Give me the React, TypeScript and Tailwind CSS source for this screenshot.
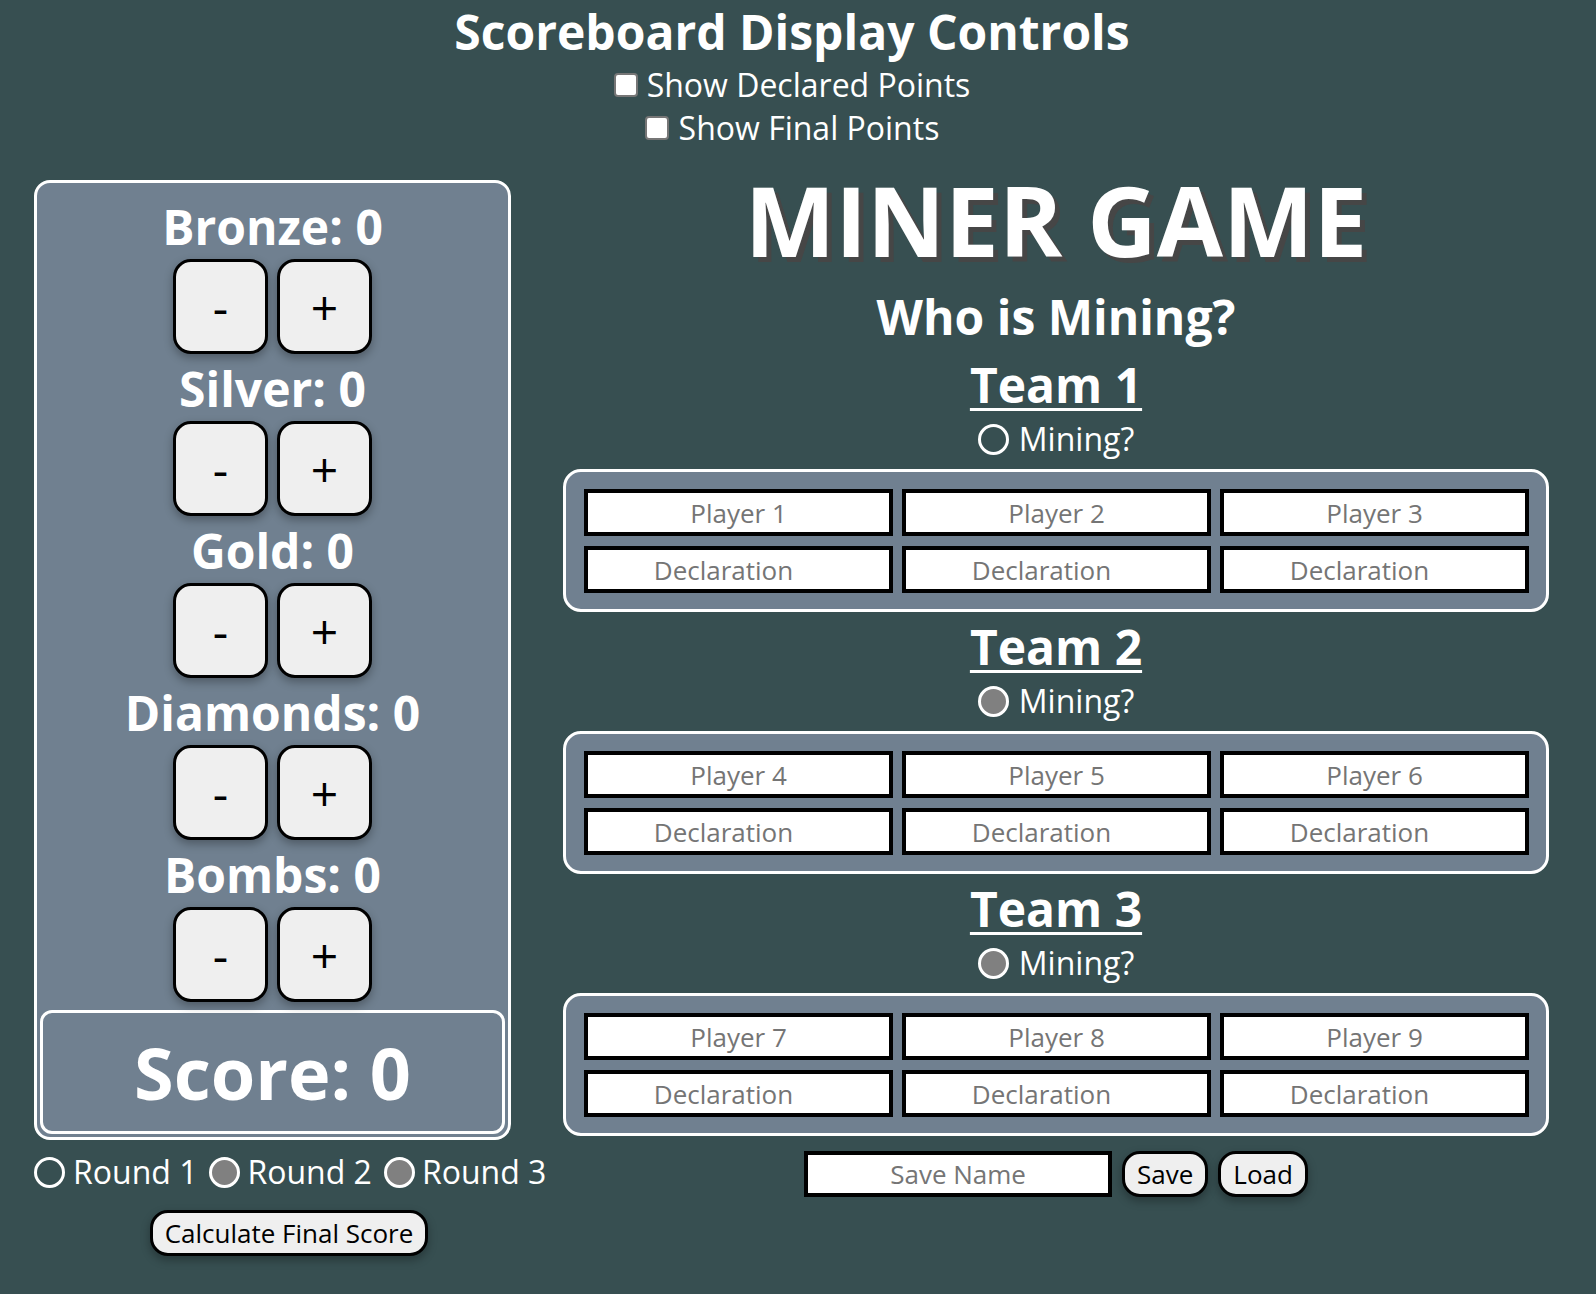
import { useState } from 'react';

const gems = ['Bronze', 'Silver', 'Gold', 'Diamonds', 'Bombs'];

const teams = [
  { name: 'Team 1', players: ['Player 1', 'Player 2', 'Player 3'], mining: false },
  { name: 'Team 2', players: ['Player 4', 'Player 5', 'Player 6'], mining: true },
  { name: 'Team 3', players: ['Player 7', 'Player 8', 'Player 9'], mining: true },
];

const Radio = ({ filled }: { filled: boolean }) => (
  <span
    className={
      filled
        ? 'inline-block w-[31px] h-[31px] rounded-full border-[3px] border-white bg-[#808080] shrink-0'
        : 'inline-block w-[31px] h-[31px] rounded-full border-[3px] border-white shrink-0'
    }
  />
);

const Checkbox = () => (
  <span className="inline-block w-[24px] h-[24px] rounded-[4px] border-2 border-[#767676] bg-white shrink-0" />
);

const App = () => {
  const [counts, setCounts] = useState<number[]>([0, 0, 0, 0, 0]);

  const change = (i: number, d: number) => {
    setCounts((prev) => prev.map((c, j) => (j === i ? c + d : c)));
  };

  return (
    <div className="min-h-screen bg-[#374f51] text-white font-['Open_Sans',sans-serif] pb-10">
      {/* Display controls */}
      <div className="pr-[12px] text-center">
        <h1 className="text-[48px] font-bold leading-[63px]">Scoreboard Display Controls</h1>
        <label className="flex items-center justify-center gap-[9px] text-[32px] leading-[43px]">
          <Checkbox />
          Show Declared Points
        </label>
        <label className="flex items-center justify-center gap-[10px] text-[32px] leading-[43px]">
          <Checkbox />
          Show Final Points
        </label>
      </div>

      <div className="flex items-start pl-[34px]">
        {/* Left column: counters */}
        <div className="w-[510px] mt-[31px] flex flex-col">
          <div className="w-[477px] border-[3px] border-white rounded-[16px] bg-[#708090] pt-[11px] px-[3px] pb-[3px]">
            {gems.map((g, i) => (
              <div key={g} className="flex flex-col items-center">
                <div className="text-[48px] font-bold leading-[65px]">
                  {g}: {counts[i]}
                </div>
                <div className="flex gap-[9px] mb-[2px]">
                  <button
                    onClick={() => change(i, -1)}
                    className="w-[95px] h-[95px] border-[3px] border-black rounded-[18px] bg-[#efefef] text-black text-[48px] leading-none shadow-[0_4px_10px_rgba(0,0,0,0.3)]"
                  >
                    -
                  </button>
                  <button
                    onClick={() => change(i, 1)}
                    className="w-[95px] h-[95px] border-[3px] border-black rounded-[18px] bg-[#efefef] text-black text-[48px] leading-none shadow-[0_4px_10px_rgba(0,0,0,0.3)]"
                  >
                    +
                  </button>
                </div>
              </div>
            ))}
            <div className="mt-[6px] border-[3px] border-white rounded-[12px] py-[10px] text-center text-[72px] font-bold leading-[98px]">
              Score: {counts.reduce((a, b) => a + b, 0)}
            </div>
          </div>

          <div className="mt-[10px] flex items-center whitespace-nowrap text-[32px] leading-[44px]">
            <Radio filled={false} />
            <span className="ml-[8px]">Round 1</span>
            <span className="ml-[12px] flex"><Radio filled /></span>
            <span className="ml-[7px]">Round 2</span>
            <span className="ml-[12px] flex"><Radio filled /></span>
            <span className="ml-[7px]">Round 3</span>
          </div>

          <div className="mt-[16px] flex justify-center">
            <button className="h-[46px] px-[12px] border-[3px] border-black rounded-[18px] bg-[#efefef] text-black text-[26px] leading-none shadow-[0_4px_10px_rgba(0,0,0,0.3)]">
              Calculate Final Score
            </button>
          </div>
        </div>

        {/* Right column: teams */}
        <div className="w-[986px] ml-[19px] mt-[7px] flex flex-col items-center">
          <h2 className="text-[96px] font-bold leading-[128px] [text-shadow:5px_5px_0_#464646]">MINER GAME</h2>
          <h3 className="text-[48px] font-bold leading-[65px]">Who is Mining?</h3>

          {teams.map((t, ti) => (
            <div key={t.name} className={ti === 0 ? 'w-full flex flex-col items-center mt-[3px]' : 'w-full flex flex-col items-center'}>
              <h4 className="text-[48px] font-bold leading-[65px] underline decoration-[3px] underline-offset-[5px]">
                {t.name}
              </h4>
              <div className="flex items-center gap-[10px] text-[32px] leading-[44px]">
                <Radio filled={t.mining} />
                Mining?
              </div>
              <div className="w-full mt-[8px] mb-[2px] border-[3px] border-white rounded-[18px] bg-[#708090] pt-[17px] pb-[16px] pl-[18px] pr-[17px]">
                <div className="grid grid-cols-3 gap-x-[9px] gap-y-[10px]">
                  {t.players.map((p) => (
                    <input
                      key={p}
                      placeholder={p}
                      className="h-[47px] w-full border-[4px] border-black bg-white text-center text-[26px] text-black placeholder:text-[#757575] outline-none"
                    />
                  ))}
                  {t.players.map((p) => (
                    <input
                      key={p + '-d'}
                      placeholder="Declaration"
                      className="h-[47px] w-full border-[4px] border-black bg-white pr-[30px] text-center text-[26px] text-black placeholder:text-[#757575] outline-none"
                    />
                  ))}
                </div>
              </div>
            </div>
          ))}

          <div className="mt-[13px] flex items-center gap-[10px]">
            <input
              placeholder="Save Name"
              className="w-[308px] h-[46px] border-[4px] border-black bg-white text-center text-[26px] text-black placeholder:text-[#757575] outline-none"
            />
            <button className="h-[46px] px-[12px] border-[3px] border-black rounded-[18px] bg-[#efefef] text-black text-[26px] leading-none shadow-[0_4px_10px_rgba(0,0,0,0.3)]">
              Save
            </button>
            <button className="h-[46px] px-[12px] border-[3px] border-black rounded-[18px] bg-[#efefef] text-black text-[26px] leading-none shadow-[0_4px_10px_rgba(0,0,0,0.3)]">
              Load
            </button>
          </div>
        </div>
      </div>
    </div>
  );
};

export default App;
